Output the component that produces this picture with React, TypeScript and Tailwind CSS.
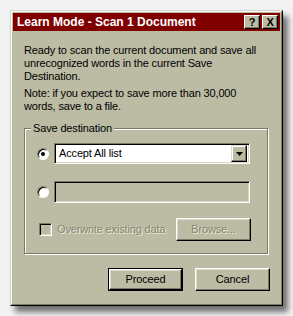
import { useState } from 'react';

const FACE = 'bg-[#bcbca4]';

const Radio = ({ checked }: { checked: boolean }) => (
  <span className="w-3 h-3 rounded-full border border-t-[#7a7a66] border-l-[#7a7a66] border-r-white border-b-white bg-white flex items-center justify-center shadow-[inset_1px_1px_0_#000]">
    {checked && <span className="w-1 h-1 rounded-full bg-black" />}
  </span>
);

const Button = ({
  label,
  isDefault,
  disabled,
}: {
  label: string;
  isDefault?: boolean;
  disabled?: boolean;
}) => (
  <div
    className={`w-[75px] h-[23px] ${
      isDefault ? 'border border-black' : ''
    }`}
  >
    <button
      type="button"
      className={`w-full h-full ${FACE} border border-t-white border-l-white border-r-black border-b-black shadow-[inset_-1px_-1px_0_#7a7a66,inset_1px_1px_0_#dcdccb] text-[11px] leading-none tracking-[-0.15px] ${
        disabled ? 'text-[#85856d] [text-shadow:1px_1px_0_#ececdf]' : 'text-black'
      }`}
    >
      {label}
    </button>
  </div>
);

const sunken =
  'border border-t-[#7a7a66] border-l-[#7a7a66] border-r-white border-b-white shadow-[inset_1px_1px_0_#000,inset_-1px_-1px_0_#d6d6c4]';

export default function App() {
  const [dest, setDest] = useState<'list' | 'file'>('list');

  return (
    <div className="w-[293px] h-[316px] bg-[#f3f3f3] pt-[10px] pl-[10px] font-['Liberation_Sans',Arial,sans-serif] text-[11px] leading-[13px] tracking-[-0.15px] text-black">
      <div
        className={`w-[273px] h-[296px] ${FACE} border border-t-[#d6d6c4] border-l-[#d6d6c4] border-r-black border-b-black shadow-[5px_6px_6px_rgba(0,0,0,0.55)]`}
      >
        <div className="h-full border border-t-white border-l-white border-r-[#7a7a66] border-b-[#7a7a66] p-px flex flex-col">
          <div className="h-[18px] bg-[#800000] flex items-center pl-[4px] pr-[2px]">
            <span className="text-white font-bold text-[12px] leading-none tracking-normal">
              Learn Mode - Scan 1 Document
            </span>
            <div className="ml-auto flex gap-[2px]">
              <span
                className={`w-[16px] h-[14px] ${FACE} border border-t-white border-l-white border-r-black border-b-black shadow-[inset_-1px_-1px_0_#7a7a66] flex items-center justify-center font-bold text-[11px] leading-none`}
              >
                ?
              </span>
              <span
                className={`w-[16px] h-[14px] ${FACE} border border-t-white border-l-white border-r-black border-b-black shadow-[inset_-1px_-1px_0_#7a7a66] flex items-center justify-center font-bold text-[11px] leading-none`}
              >
                X
              </span>
            </div>
          </div>

          <div className="pl-[11px] pr-[12px] pt-[13px]">
            <p>
              Ready to scan the current document and save all unrecognized
              words in the current Save Destination.
            </p>
            <p className="mt-[4px] pr-[10px]">
              Note: if you expect to save more than 30,000 words, save to a
              file.
            </p>

            <div className="relative mt-[15px] w-[244px] h-[126px] border border-[#7a7a66] shadow-[inset_1px_1px_0_#fff,1px_1px_0_#fff] pl-[12px] pt-[14px]">
              <span className={`absolute left-[6px] top-[-7px] px-[2px] ${FACE}`}>
                Save destination
              </span>

              <div className="flex items-center gap-[5px]">
                <button type="button" onClick={() => setDest('list')}>
                  <Radio checked={dest === 'list'} />
                </button>
                <div className={`w-[196px] h-[21px] bg-white ${sunken} flex items-center pl-[4px] pr-[2px]`}>
                  <span>Accept All list</span>
                  <span
                    className={`ml-auto w-[16px] h-[17px] ${FACE} border border-t-[#dcdccb] border-l-[#dcdccb] border-r-black border-b-black shadow-[inset_-1px_-1px_0_#7a7a66,inset_1px_1px_0_#fff] flex items-center justify-center`}
                  >
                    <svg width="7" height="4" viewBox="0 0 7 4">
                      <path d="M0 0h7L3.5 4z" fill="#000" />
                    </svg>
                  </span>
                </div>
              </div>

              <div className="flex items-center gap-[5px] mt-[17px]">
                <button type="button" onClick={() => setDest('file')}>
                  <Radio checked={dest === 'file'} />
                </button>
                <div className={`w-[196px] h-[22px] ${FACE} ${sunken}`} />
              </div>

              <div className="flex items-center mt-[15px] pl-[2px]">
                <span className={`w-[13px] h-[13px] ${FACE} ${sunken}`} />
                <span className="ml-[5px] text-[#85856d] [text-shadow:1px_1px_0_#ececdf]">
                  Overwrite existing data
                </span>
                <div className="ml-auto mr-[16px]">
                  <Button label="Browse..." disabled />
                </div>
              </div>
            </div>

            <div className="flex justify-end gap-[12px] mt-[14px] mr-[-2px]">
              <Button label="Proceed" isDefault />
              <Button label="Cancel" />
            </div>
          </div>
        </div>
      </div>
    </div>
  );
}
